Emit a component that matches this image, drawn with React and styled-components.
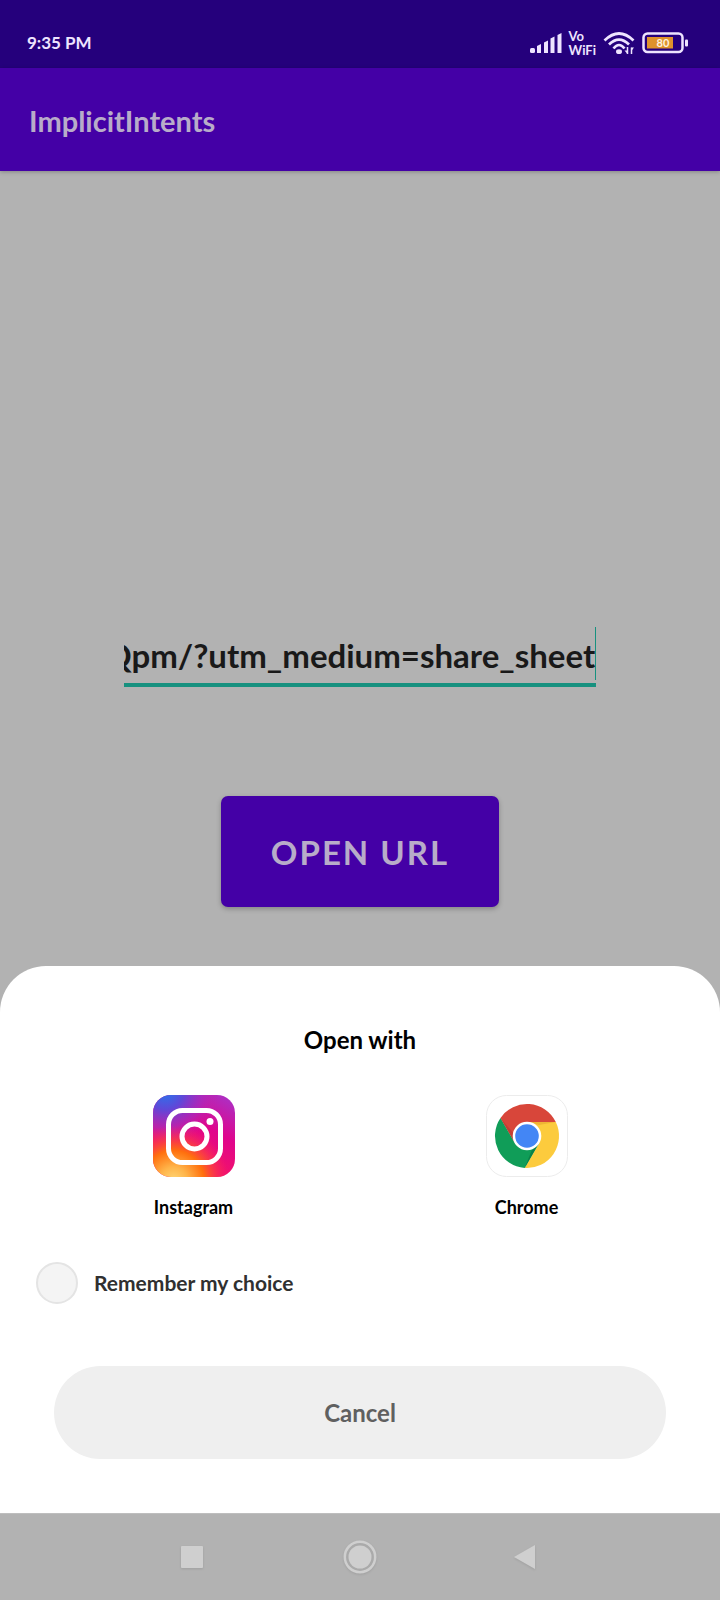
import React, { useLayoutEffect, useRef, useState } from "react";
import styled, { createGlobalStyle } from "styled-components";

const GlobalStyle = createGlobalStyle`
  *, *::before, *::after { box-sizing: border-box; }
  body {
    margin: 0;
    background: #b2b2b2;
    font-family: Lato, "Liberation Sans", sans-serif;
    font-weight: 700;
  }
  button, input { font: inherit; }
  button { border: 0; cursor: pointer; }
`;

const Screen = styled.div`
  min-height: 100vh;
  display: flex;
  flex-direction: column;
`;

const StatusBar = styled.header`
  height: 68px;
  padding: 18px 32px 0 27px;
  display: flex;
  align-items: center;
  justify-content: space-between;
  background: #25007c;
  color: #eee4ff;
`;

const Clock = styled.time`
  font-size: 17px;
  line-height: 24px;
`;

const StatusIcons = styled.div`
  display: flex;
  align-items: center;
  gap: 7px;
  svg { display: block; }
`;

const NetworkLabel = styled.span`
  font-size: 13px;
  line-height: 14px;
`;

const AppBar = styled.div`
  height: 103px;
  padding: 2px 29px 0;
  display: flex;
  align-items: center;
  background: #4400a6;
  box-shadow: 0 1px 4px rgba(0, 0, 0, 0.25);
`;

const AppTitle = styled.h1`
  margin: 0;
  font-size: 29px;
  line-height: 36px;
  color: #b8acc9;
`;

const Content = styled.main`
  flex: 1;
  padding: 456px 24px 59px;
  display: flex;
  flex-direction: column;
  align-items: center;
  gap: 109px;
`;

const UrlField = styled.div`
  position: relative;
  width: 100%;
  max-width: 472px;
`;

const UrlInput = styled.input`
  display: block;
  width: 100%;
  height: 60px;
  padding: 0 1px 0 0;
  border: 0;
  border-bottom: 4px solid #17917f;
  border-radius: 0;
  outline: 0;
  background: transparent;
  color: #191919;
  caret-color: transparent;
  font-size: 33px;
`;

const Caret = styled.span`
  position: absolute;
  top: 0;
  right: 0;
  width: 1px;
  height: 53px;
  background: #17917f;
`;

const OpenButton = styled.button`
  min-width: 278px;
  height: 111px;
  padding: 0 40px;
  border-radius: 7px;
  background: #4400a6;
  color: #b8acc9;
  font-size: 33px;
  letter-spacing: 2px;
  box-shadow: 0 2px 5px rgba(0, 0, 0, 0.25);
`;

const Sheet = styled.section`
  padding: 56px 27px 54px;
  border-radius: 46px 46px 0 0;
  background: #fff;
  color: #000;
`;

const SheetTitle = styled.h2`
  margin: 0 0 37px;
  font-size: 24px;
  line-height: 36px;
  text-align: center;
`;

const AppGrid = styled.div`
  display: grid;
  grid-template-columns: 1fr 1fr;
`;

const AppChoice = styled.button`
  padding: 0;
  display: flex;
  flex-direction: column;
  align-items: center;
  gap: 18px;
  background: transparent;
  color: #000;
  font-size: 18px;
  line-height: 24px;
  svg { display: block; }
`;

const Remember = styled.label`
  margin: 43px 9px 62px;
  display: flex;
  align-items: center;
  gap: 16px;
  color: #303030;
  font-size: 21px;
  line-height: 28px;
`;

const RoundCheck = styled.input`
  appearance: none;
  flex: none;
  width: 42px;
  height: 42px;
  margin: 0;
  border: 2px solid #e4e4e4;
  border-radius: 50%;
  background: #f4f4f4;
  &:checked { background: #4400a6; }
`;

const CancelRow = styled.div`
  padding: 0 27px;
`;

const CancelButton = styled.button`
  display: block;
  width: 100%;
  height: 93px;
  border-radius: 47px;
  background: #efefef;
  color: #606060;
  font-size: 24px;
`;

const NavBar = styled.nav`
  height: 87px;
  padding: 0 108px;
  display: grid;
  grid-template-columns: repeat(3, 1fr);
  border-top: 1px solid #bebebe;
  background: #b2b2b2;
`;

const NavButton = styled.button`
  padding: 0;
  display: flex;
  align-items: center;
  justify-content: center;
  background: transparent;
  svg { filter: drop-shadow(0 1px 1px rgba(0, 0, 0, 0.1)); }
`;

const SignalIcon = () => (
  <svg width="32" height="22" viewBox="0 0 32 22" fill="#eee4ff" aria-hidden="true">
    <rect x="0" y="16" width="5" height="5" rx="1.5" />
    <path d="M7 14l4-2v9H7zM14 10.500l4-2V21h-4zM20.500 6.500l4-2V21h-4zM27.500 3l4-2v20h-4z" />
  </svg>
);

const WifiIcon = () => (
  <svg width="32" height="24" viewBox="0 0 32 24" aria-hidden="true">
    <g fill="none" stroke="#eee4ff" strokeWidth="2.700">
      <path d="M1.500 9.500Q16-4.500 30.500 9.500" />
      <path d="M6 13.500Q16 3.500 26 13.500" />
      <path d="M10.500 17.500Q16 10.500 21.500 17.500" />
    </g>
    <ellipse cx="16" cy="20.700" rx="3" ry="2.400" fill="#eee4ff" />
    <path d="M24.500 16v7M28.500 23v-6.500" stroke="#eee4ff" strokeWidth="1.500" />
    <path d="M21.500 19.500h3V23zM28.500 16.500h2.500L28.500 20z" fill="#eee4ff" />
  </svg>
);

const BatteryIcon = () => (
  <svg width="46" height="22" viewBox="0 0 46 22" role="img" aria-label="Battery">
    <rect x="1.500" y="1.500" width="39" height="18.500" rx="4" fill="none" stroke="#eee4ff" strokeWidth="2.500" />
    <rect x="5" y="5" width="26" height="11.500" fill="#df922c" />
    <rect x="43" y="7.500" width="3" height="7" rx="1" fill="#eee4ff" />
    <text x="21" y="15" textAnchor="middle" fontSize="11" fontWeight="700" fill="#fff1de">80</text>
  </svg>
);

const InstagramIcon = () => (
  <svg width="82" height="82" viewBox="0 0 82 82" aria-hidden="true">
    <defs>
      <linearGradient id="igBase" x1="0.300" y1="0.900" x2="0.800" y2="0">
        <stop offset="0.250" stopColor="#f0106e" />
        <stop offset="0.600" stopColor="#e0058c" />
        <stop offset="1" stopColor="#b02cc0" />
      </linearGradient>
      <radialGradient id="igBlue" cx="0.150" cy="-0.050" r="0.650">
        <stop offset="0" stopColor="#2677ed" />
        <stop offset="0.350" stopColor="#5f48d8" />
        <stop offset="0.700" stopColor="#a42cc0" stopOpacity="0.700" />
        <stop offset="1" stopColor="#c520a5" stopOpacity="0" />
      </radialGradient>
      <radialGradient id="igWarm" cx="0.250" cy="1.050" r="0.680">
        <stop offset="0" stopColor="#ffd878" />
        <stop offset="0.250" stopColor="#ffb54a" />
        <stop offset="0.550" stopColor="#ff6f0d" />
        <stop offset="1" stopColor="#ff2860" stopOpacity="0" />
      </radialGradient>
    </defs>
    <rect width="82" height="82" rx="18" fill="url(#igBase)" />
    <rect width="82" height="82" rx="18" fill="url(#igBlue)" />
    <rect width="82" height="82" rx="18" fill="url(#igWarm)" />
    <g fill="none" stroke="#fff" strokeWidth="5">
      <rect x="15.500" y="15.500" width="52" height="52" rx="14" />
      <circle cx="41.500" cy="41.500" r="12.500" />
    </g>
    <circle cx="57" cy="26.500" r="3.500" fill="#fff" />
  </svg>
);

const ChromeIcon = () => (
  <svg width="82" height="82" viewBox="0 0 82 82" aria-hidden="true">
    <rect x="0.500" y="0.500" width="81" height="81" rx="20" fill="#fff" stroke="#ececec" />
    <path d="M14.500 23A32 32 0 0 1 69.800 27H41L28.900 48Z" fill="#d8463a" />
    <path d="M69.800 27A32 32 0 0 1 38.700 72.900L53.100 48 41 27Z" fill="#fccb3d" />
    <path d="M38.700 72.900A32 32 0 0 1 14.500 23L28.900 48H53.100Z" fill="#109d58" />
    <path d="M41 27H69.800L53 30Z" fill="#eeb435" />
    <path d="M14.500 23L28.900 48 29 40Z" fill="#c33f34" />
    <path d="M38.700 72.900L53.100 48 47 52Z" fill="#0b8248" />
    <circle cx="41" cy="41" r="14.300" fill="#fff" />
    <circle cx="41" cy="41" r="11.800" fill="#4386f5" />
  </svg>
);

const RecentsIcon = () => (
  <svg width="22" height="22" viewBox="0 0 22 22" aria-hidden="true">
    <rect width="22" height="22" rx="1" fill="#cfcfcf" />
  </svg>
);

const HomeIcon = () => (
  <svg width="34" height="34" viewBox="0 0 34 34" aria-hidden="true">
    <circle cx="17" cy="17" r="15.200" fill="#aaa" stroke="#cfcfcf" strokeWidth="2.500" />
    <circle cx="17" cy="17" r="11.500" fill="#cfcfcf" />
  </svg>
);

const BackIcon = () => (
  <svg width="28" height="24" viewBox="0 0 28 24" aria-hidden="true">
    <path d="M0 12L21 0V24Z" fill="#cfcfcf" />
  </svg>
);

const apps = [
  { name: "Instagram", Icon: InstagramIcon },
  { name: "Chrome", Icon: ChromeIcon },
];

export default function App() {
  const [url, setUrl] = useState("Qpm/?utm_medium=share_sheet");
  const [remember, setRemember] = useState(false);
  const field = useRef(null);

  // Keep the end of a long address in view.
  useLayoutEffect(() => {
    field.current.scrollLeft = field.current.scrollWidth;
  }, [url]);

  return (
    <Screen>
      <GlobalStyle />
      <StatusBar>
        <Clock>9:35 PM</Clock>
        <StatusIcons>
          <SignalIcon />
          <NetworkLabel>Vo<br />WiFi</NetworkLabel>
          <WifiIcon />
          <BatteryIcon />
        </StatusIcons>
      </StatusBar>
      <AppBar>
        <AppTitle>ImplicitIntents</AppTitle>
      </AppBar>
      <Content>
        <UrlField>
          <UrlInput
            ref={field}
            type="text"
            aria-label="URL"
            spellCheck={false}
            value={url}
            onChange={(e) => setUrl(e.target.value)}
          />
          <Caret />
        </UrlField>
        <OpenButton type="button">OPEN URL</OpenButton>
      </Content>
      <Sheet role="dialog" aria-labelledby="sheet-title">
        <SheetTitle id="sheet-title">Open with</SheetTitle>
        <AppGrid>
          {apps.map(({ name, Icon }) => (
            <AppChoice key={name} type="button">
              <Icon />
              {name}
            </AppChoice>
          ))}
        </AppGrid>
        <Remember>
          <RoundCheck
            type="checkbox"
            checked={remember}
            onChange={(e) => setRemember(e.target.checked)}
          />
          Remember my choice
        </Remember>
        <CancelRow>
          <CancelButton type="button">Cancel</CancelButton>
        </CancelRow>
      </Sheet>
      <NavBar aria-label="System">
        <NavButton type="button" aria-label="Recents"><RecentsIcon /></NavButton>
        <NavButton type="button" aria-label="Home"><HomeIcon /></NavButton>
        <NavButton type="button" aria-label="Back"><BackIcon /></NavButton>
      </NavBar>
    </Screen>
  );
}
